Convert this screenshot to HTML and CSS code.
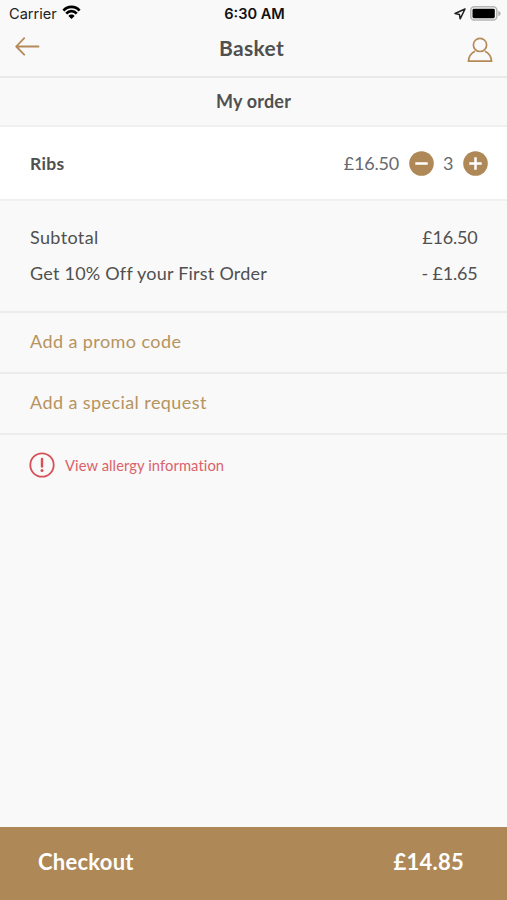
FILE: index.html
```html
<!DOCTYPE html>
<html lang="en">
<head>
<meta charset="utf-8">
<meta name="viewport" content="width=device-width, initial-scale=1">
<title>Basket</title>
<link rel="stylesheet" href="styles.css">
</head>
<body>
<div class="screen">
  <div class="status">
    <div class="carrier"><span>Carrier</span>
      <svg class="wifi" width="19" height="15" viewBox="0 0 20 16" fill="none" stroke="#000" stroke-width="2.9"><path d="M1.4 5.9C6 .6 14 .6 18.6 5.9M4.4 9.1c3-3.4 8.2-3.4 11.2 0"/><path d="M6.7 11.6c1.8-2 4.8-2 6.6 0L10 15z" fill="#000" stroke="none"/></svg>
    </div>
    <span class="clock">6:30 AM</span>
    <div class="power">
      <svg width="12" height="12" viewBox="0 0 12 12" fill="none" stroke="#222" stroke-width="1.5" stroke-linejoin="round"><path d="M11 1 1 5.5l4.4.9.8 4.4z"/></svg>
      <svg width="31" height="15" viewBox="0 0 31 15"><rect x=".8" y=".8" width="26" height="13.2" rx="3.5" fill="#f9f9f9" stroke="#b5b5b5" stroke-width="1.5"/><rect x="2.5" y="2.7" width="22.3" height="9.5" rx="1.4"/><path d="M28.4 4.7q2.2 1 2.2 2.8t-2.2 2.8z" fill="#aaa"/></svg>
    </div>
  </div>
  <header class="nav">
    <svg class="back" width="25" height="19" viewBox="0 0 25 19" fill="none" stroke="#b58a59" stroke-width="1.8" stroke-linecap="round" stroke-linejoin="round"><path d="M23.5 9.5H1.2M9.2 1.2l-8 8.3 8 8.2"/></svg>
    <h1>Basket</h1>
    <svg class="user" width="26" height="26" viewBox="0 0 26 26" fill="none" stroke="#b58a59" stroke-width="1.7" stroke-linejoin="round"><circle cx="13" cy="7.9" r="6.6"/><path d="M8.1 14.2C4.3 16 1.8 19.5 1.4 24.2h23.2c-.4-4.7-2.9-8.2-6.7-10"/></svg>
  </header>
  <h2 class="section">My order</h2>
  <div class="item">
    <span class="name">Ribs</span>
    <span class="price">£16.50</span>
    <button class="step" aria-label="Remove one"><svg width="25" height="25" viewBox="0 0 25 25"><circle cx="12.5" cy="12.5" r="12.3" fill="#ae8857"/><path d="M6.3 12.5h12.4" stroke="#fff" stroke-width="2.5"/></svg></button>
    <span class="count">3</span>
    <button class="step" aria-label="Add one"><svg width="25" height="25" viewBox="0 0 25 25"><circle cx="12.5" cy="12.5" r="12.3" fill="#ae8857"/><path d="M6.3 12.5h12.4M12.5 6.3v12.4" stroke="#fff" stroke-width="2.5"/></svg></button>
  </div>
  <div class="totals">
    <div class="row"><span class="subtotal">Subtotal</span><span class="amount">£16.50</span></div>
    <div class="row"><span class="offer">Get 10% Off your First Order</span><span class="amount">- £1.65</span></div>
  </div>
  <a class="action">Add a promo code</a>
  <a class="action">Add a special request</a>
  <a class="allergy">
    <svg width="26" height="26" viewBox="0 0 26 26" fill="none" stroke="#d75058"><circle cx="13" cy="13" r="11.7" stroke-width="1.8"/><path d="M13 7v7.5" stroke-width="2.4" stroke-linecap="round"/><circle cx="13" cy="18.6" r="1.5" fill="#d75058" stroke="none"/></svg>
    <span>View allergy information</span>
  </a>
  <footer class="checkout"><span class="label">Checkout</span><span>£14.85</span></footer>
</div>
</body>
</html>
```
FILE: styles.css
```css
* { box-sizing: border-box; }
body { margin: 0; background: #f9f9f9; color: #505050; font-family: Lato, "Noto Sans", sans-serif; }
h1, h2 { margin: 0; font-weight: 700; }
.screen { height: 900px; display: flex; flex-direction: column; font-size: 18px; letter-spacing: .36px; }
.status { height: 27px; flex: none; display: grid; grid-template-columns: 1fr auto 1fr; align-items: center; padding: 1px 7px 0 9px; font: 14.6px/26px Inter, sans-serif; color: #222; letter-spacing: 0; }
.carrier, .power { display: flex; align-items: center; }
.carrier { gap: 5px; }
.wifi { margin-top: -3px; }
.clock { font-weight: 600; color: #111; }
.power { justify-content: flex-end; gap: 4px; margin-right: -1px; margin-top: -1px; }
.nav { height: 51px; flex: none; display: grid; grid-template-columns: 1fr auto 1fr; align-items: start; padding: 10px 14px 0 15px; border-bottom: 2px solid #e9e9e9; }
.nav h1 { font-size: 21px; line-height: 24px; letter-spacing: .35px; margin: -1px 5px 0 0; }
.user { justify-self: end; }
.section { height: 49px; flex: none; border-bottom: 2px solid #f0f0f0; font-size: 18px; line-height: 47px; letter-spacing: .2px; text-align: center; }
.item { height: 74px; flex: none; display: flex; align-items: center; padding: 0 19px 0 30px; background: #fff; border-bottom: 2px solid #f0f0f0; }
.name { flex: 1; font-size: 17.5px; font-weight: 700; }
.price, .count { color: #666a6e; }
.price, .amount { letter-spacing: -.2px; }
.price { margin-right: 10px; }
.count { width: 29px; text-align: center; }
.step { width: 25px; height: 25px; padding: 0; border: 0; background: none; }
.step svg { display: block; }
.totals { height: 112px; flex: none; padding: 19px 29.5px 0 30px; border-bottom: 2px solid #ececec; }
.row { display: flex; justify-content: space-between; line-height: 35.5px; }
.offer { letter-spacing: .23px; }
.action { height: 61px; flex: none; padding-left: 30px; border-bottom: 2px solid #ececec; color: #b6935f; line-height: 57px; letter-spacing: .42px; }
.allergy { display: flex; align-items: center; gap: 10px; padding: 17px 0 0 29px; color: #da626a; font-size: 14.7px; letter-spacing: .1px; }
.checkout { height: 73px; margin-top: auto; display: flex; justify-content: space-between; padding: 0 43px 0 38px; background: #ae8857; color: #fff; font-size: 22px; font-weight: 700; line-height: 70px; letter-spacing: .25px; }
```
